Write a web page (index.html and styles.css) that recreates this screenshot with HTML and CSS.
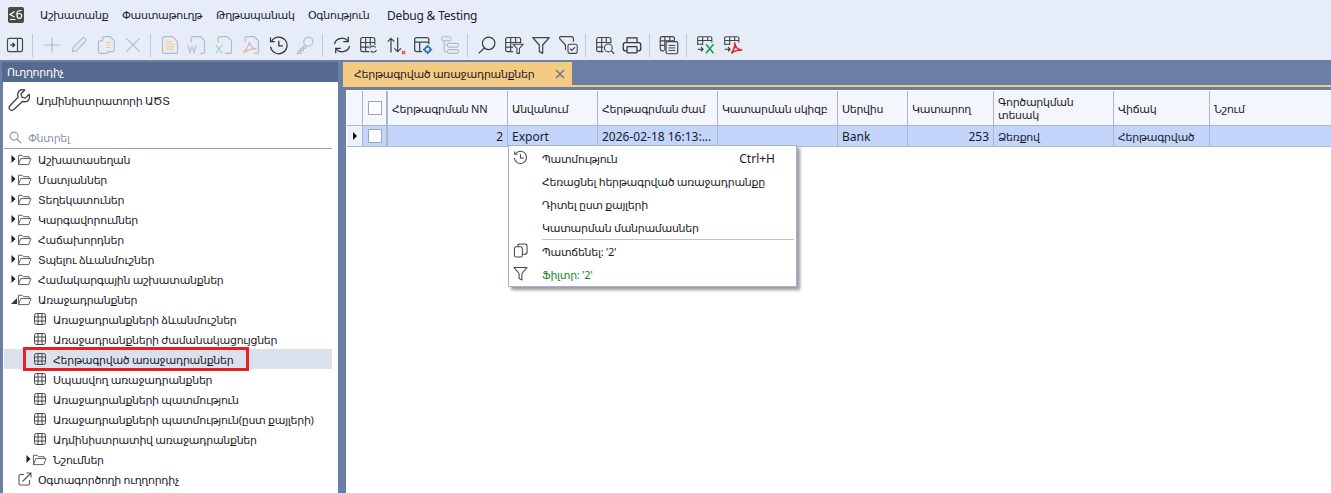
FILE: index.html
```html
<!DOCTYPE html>
<html lang="hy">
<head>
<meta charset="utf-8">
<title>Հերթագրված առաջադրանքներ</title>
<link rel="stylesheet" href="styles.css">
</head>
<body>
<svg class="defs" width="0" height="0">
  <symbol id="folder" viewBox="0 0 16 14"><path d="M1.5 12.5V2.5h4l1.5 1.5h6v2M1.5 12.5l2.5-6.500h11l-2.500 6.500z" fill="none" stroke="currentColor"/></symbol>
  <symbol id="grid" viewBox="0 0 14 14"><rect x="1.500" y="1.500" width="11" height="11" rx="2" fill="none" stroke="currentColor"/><path d="M1.500 5h11M1.500 9h11M5 1.500v11M9 1.500v11" stroke="currentColor" fill="none"/></symbol>
  <symbol id="arrow" viewBox="0 0 6 10"><path d="M0.500 1l4 4-4 4z" fill="currentColor"/></symbol>
</svg>

<header class="menubar">
  <svg class="logo" viewBox="0 0 16 16"><rect width="16" height="16" rx="2" fill="#4a4a4a"/><path d="M6.500 4.500L2 7.500 6.500 10M2 12.500h5.500M9 8V6c0-1.500 1-2.500 4.500-2.500M9 8.500c0-1.500 1-2 2.300-2s2.400.7 2.400 2.300-1 2.500-2.400 2.500S9 10 9 8.500z" fill="none" stroke="#fff" stroke-width="1.200"/></svg>
  <nav class="menu">
    <span class="m1">Աշխատանք</span>
    <span class="m2">Փաստաթուղթ</span>
    <span class="m3">Թղթապանակ</span>
    <span class="m4">Օգնություն</span>
    <span class="m5 lat">Debug &amp; Testing</span>
  </nav>
</header>

<div class="toolbar">
  <span class="tb"><svg viewBox="0 0 24 24"><rect x="3" y="4" width="18" height="16" rx="2" fill="none" stroke="#444" stroke-width="1.400"/><path d="M15 4v16" stroke="#444" stroke-width="1.400"/><path d="M6 12h5M9 9.500l2.500 2.500L9 14.500" fill="none" stroke="#222" stroke-width="1.400"/></svg></span>
  <i class="sep"></i>
  <span class="tb off"><svg viewBox="0 0 24 24"><path d="M12 3v18M3 12h18" stroke="#b5bac4" stroke-width="1.400"/></svg></span>
  <span class="tb off"><svg viewBox="0 0 24 24"><path d="M4 20l1-5L16 4c1-1 2.500-1 3.500 0s1 2.500 0 3.500L9 19z" fill="none" stroke="#b5bac4" stroke-width="1.400"/></svg></span>
  <span class="tb off"><svg viewBox="0 0 24 24"><rect x="3" y="7" width="11" height="15" rx="2" fill="none" stroke="#b5bac4" stroke-width="1.400"/><path d="M8 7V4c0-1 1-2 2-2h7l5 5v11c0 1-1 2-2 2h-6" fill="#e7edf8" stroke="#b5bac4" stroke-width="1.400"/><path d="M12 9h6M12 12h6M12 15h6" stroke="#f2cd97" stroke-width="1.300"/></svg></span>
  <span class="tb off"><svg viewBox="0 0 24 24"><path d="M4 20l16-16M4 4l16 16" stroke="#b5bac4" stroke-width="1.400"/></svg></span>
  <i class="sep"></i>
  <span class="tb off"><svg viewBox="0 0 24 24"><path d="M5 2h10l6 6v12c0 1-1 2-2 2H5c-1 0-2-1-2-2V4c0-1 1-2 2-2z" fill="none" stroke="#b5bac4" stroke-width="1.400"/><path d="M7 8h8M7 11h10M7 14h10M7 17h10" stroke="#f2cd97" stroke-width="1.400"/></svg></span>
  <span class="tb off"><svg viewBox="0 0 24 24"><path d="M5 9V4c0-1 1-2 2-2h9l5 5v13c0 1-1 2-2 2h-3" fill="none" stroke="#b5bac4" stroke-width="1.400"/><path d="M1 12l2.500 9L6 14l2.500 7L11 12" fill="none" stroke="#a9c4e6" stroke-width="1.400"/></svg></span>
  <span class="tb off"><svg viewBox="0 0 24 24"><path d="M5 9V4c0-1 1-2 2-2h9l5 5v13c0 1-1 2-2 2h-6" fill="none" stroke="#b5bac4" stroke-width="1.400"/><path d="M2 12l8 10M10 12l-8 10" stroke="#a8d8b4" stroke-width="1.500"/></svg></span>
  <span class="tb off"><svg viewBox="0 0 24 24"><path d="M5 8V4c0-1 1-2 2-2h9l5 5v13c0 1-1 2-2 2h-3" fill="none" stroke="#b5bac4" stroke-width="1.400"/><path d="M10 8c1 5 3 8 9 9-5-1-10 0-16 4 3-4 7-8 7-13z" fill="none" stroke="#eeb0ad" stroke-width="1.500"/></svg></span>
  <span class="tb"><svg viewBox="0 0 24 24"><path d="M4.500 7A10 10 0 1 1 3 14" fill="none" stroke="#333" stroke-width="1.500"/><path d="M3 3v5h5M13 7v6h5" fill="none" stroke="#333" stroke-width="1.500"/></svg></span>
  <span class="tb off"><svg viewBox="0 0 24 24"><circle cx="16" cy="8" r="5.500" fill="none" stroke="#b5bac4" stroke-width="1.400"/><path d="M12 12L3 21v1h4v-3h3v-3h2l1.500-2" fill="none" stroke="#b5bac4" stroke-width="1.400"/></svg></span>
  <i class="sep"></i>
  <span class="tb"><svg viewBox="0 0 24 24"><path d="M3 11a9 8 0 0 1 16-4M21 13a9 8 0 0 1-16 4" fill="none" stroke="#333" stroke-width="1.500"/><path d="M19.500 2v6h-6M4.500 22v-6h6" fill="none" stroke="#333" stroke-width="1.500"/></svg></span>
  <span class="tb"><svg viewBox="0 0 24 24"><rect x="2" y="3" width="17" height="17" rx="2.500" fill="none" stroke="#444" stroke-width="1.400"/><path d="M2 9h17M2 14.500h17M8 3v17M13.500 3v17" stroke="#444" stroke-width="1.400"/><circle cx="17" cy="17" r="5.500" fill="#e7edf8"/><path d="M13 16a4 4 0 0 1 7-1M21 18a4 4 0 0 1-7 1" fill="none" stroke="#444" stroke-width="1.300"/></svg></span>
  <span class="tb"><svg viewBox="0 0 24 24"><path d="M6 21V4M2 8l4-4 4 4M14 3v17M10 16l4 4 4-4" fill="none" stroke="#444" stroke-width="1.500"/><path d="M19 19l4 4M23 19l-4 4" stroke="#e23b3b" stroke-width="1.500"/></svg></span>
  <span class="tb"><svg viewBox="0 0 24 24"><path d="M11 20H4.500C3 20 2 19 2 17.500V5.500C2 4 3 3 4.500 3h12C18 3 19 4 19 5.500V11M2 8.500h17M8 8.500V20" fill="none" stroke="#444" stroke-width="1.500"/><circle cx="17.500" cy="17.500" r="3.200" fill="none" stroke="#2d74c4" stroke-width="2.200"/><path d="M17.500 12v2M17.500 21v2M12 17.500h2M21 17.500h2" stroke="#2d74c4" stroke-width="2"/></svg></span>
  <span class="tb off"><svg viewBox="0 0 24 24"><rect x="2" y="2" width="11" height="5" rx="1.500" fill="none" stroke="#b5bac4" stroke-width="1.300"/><rect x="9" y="10" width="13" height="4.500" rx="1.500" fill="none" stroke="#b5bac4" stroke-width="1.300"/><rect x="9" y="17.500" width="13" height="4.500" rx="1.500" fill="none" stroke="#b5bac4" stroke-width="1.300"/><path d="M5 7v13h4M5 12h4" fill="none" stroke="#b5bac4" stroke-width="1.300"/></svg></span>
  <i class="sep"></i>
  <span class="tb"><svg viewBox="0 0 24 24"><circle cx="14" cy="10" r="7.500" fill="none" stroke="#333" stroke-width="1.400"/><path d="M9 15.500L2 22" stroke="#333" stroke-width="1.500"/></svg></span>
  <span class="tb"><svg viewBox="0 0 24 24"><path d="M11 20H4.500C3 20 2 19 2 17.500V5.500C2 4 3 3 4.500 3h13C19 3 20 4 20 5.500V10M2 9h18M2 14.500h9M8 3v17M14 3v7" fill="none" stroke="#444" stroke-width="1.400"/><path d="M11 11h12l-4.500 5v6h-3v-6z" fill="#e7edf8" stroke="#444" stroke-width="1.300"/></svg></span>
  <span class="tb"><svg viewBox="0 0 24 24"><path d="M2 3h20l-8 9v10l-4-2v-8z" fill="none" stroke="#444" stroke-width="1.500" stroke-linejoin="round"/></svg></span>
  <span class="tb"><svg viewBox="0 0 24 24"><path d="M9 18v-6L2 4.500C1.500 3 2 2 3.500 2H16c1.500 0 2.500 1 2.500 2.500V8" fill="none" stroke="#444" stroke-width="1.400"/><rect x="12" y="11" width="11" height="11" rx="2" fill="none" stroke="#444" stroke-width="1.300"/><path d="M14.500 16.500l2 2 4-4" fill="none" stroke="#444" stroke-width="1.300"/></svg></span>
  <i class="sep"></i>
  <span class="tb"><svg viewBox="0 0 24 24"><path d="M10 20H4.500C3 20 2 19 2 17.500V5.500C2 4 3 3 4.500 3h12C18 3 19 4 19 5.500V10M2 9h17M2 14.500h8M8 3v17M13.500 3v7" fill="none" stroke="#444" stroke-width="1.400"/><circle cx="16" cy="15.500" r="4.700" fill="#e7edf8" stroke="#444" stroke-width="1.300"/><path d="M19.500 19l3.500 3.500" stroke="#444" stroke-width="1.500"/></svg></span>
  <span class="tb"><svg viewBox="0 0 24 24"><path d="M6 9V3.500h12V9M6 19H4c-1.500 0-2.500-1-2.500-2.500V11.500C1.500 10 2.500 9 4 9h16c1.500 0 2.500 1 2.500 2.500v5c0 1.500-1 2.500-2.500 2.500h-2" fill="none" stroke="#333" stroke-width="1.500"/><rect x="6" y="14" width="12" height="7.500" rx="1" fill="none" stroke="#333" stroke-width="1.500"/></svg></span>
  <i class="sep"></i>
  <span class="tb"><svg viewBox="0 0 24 24"><path d="M6 19H4c-1.500 0-2.500-1-2.500-2.500v-12C1.500 3 2.500 2 4 2h12c1.500 0 2.500 1 2.500 2.500V7M1.500 7h17M1.500 12.500h5M7 2v17M13 2v5" fill="none" stroke="#444" stroke-width="1.400"/><rect x="8.500" y="8" width="14" height="14.500" rx="2" fill="#e7edf8" stroke="#444" stroke-width="1.400"/><path d="M11.500 12.500h8M11.500 15.500h8M11.500 18.500h8" stroke="#444" stroke-width="1.200"/></svg></span>
  <i class="sep"></i>
  <span class="tb"><svg viewBox="0 0 24 24"><path d="M2 12V3.500C2 2.500 3 2 4 2h13c1 0 2 .5 2 1.500V9M2 6.500h17M8 2v10M14 2v5M2 11h6" fill="none" stroke="#444" stroke-width="1.300"/><path d="M2 17h6M6 14.500L8.500 17 6 19.500" fill="none" stroke="#333" stroke-width="1.300"/><path d="M12 11l9 11M21 11l-9 11" stroke="#18a050" stroke-width="2"/></svg></span>
  <span class="tb"><svg viewBox="0 0 24 24"><path d="M2 12V3.500C2 2.500 3 2 4 2h13c1 0 2 .5 2 1.500V9M2 6.500h17M8 2v10M14 2v5M2 11h6" fill="none" stroke="#444" stroke-width="1.300"/><path d="M2 17h6M6 14.500L8.500 17 6 19.500" fill="none" stroke="#333" stroke-width="1.300"/><path d="M14 9c.5 5 2 8 9 9-5 0-9 0-13 4 3-4 5-8 4-13z" fill="none" stroke="#e0282e" stroke-width="2"/></svg></span>
</div>

<main class="main">
  <aside class="side">
    <h2 class="side-title">Ուղղորդիչ</h2>
    <div class="side-body">
      <div class="admin">
        <svg class="wrench" viewBox="0 0 24 24"><path d="M22 5.500l-4 4-3.500-1-1-3.500 4-4c-3-.8-6 .2-7 3-.6 1.600-.4 3 .2 4.300L2 17.500c-1.500 1.500-.8 3.200 0 4s2.500 1.300 4 0l9.500-8.700c1.300.6 2.800.7 4.200.1 2.500-1 3.200-4.400 2.300-7.400z" fill="none" stroke="#444" stroke-width="1.400" stroke-linejoin="round"/></svg>
        <span>Ադմինիստրատորի ԱԾՏ</span>
      </div>
      <div class="search">
        <svg class="mag" viewBox="0 0 14 14"><circle cx="5.500" cy="5.500" r="4.300" fill="none" stroke="#8a93a6" stroke-width="1.200"/><path d="M8.700 8.700l4.300 4.300" stroke="#8a93a6" stroke-width="1.300"/></svg>
        <span>Փնտրել</span>
      </div>
      <ul class="tree">
        <li class="node"><svg class="tw"><use href="#arrow"/></svg><svg class="fd"><use href="#folder"/></svg><span>Աշխատասեղան</span></li>
        <li class="node"><svg class="tw"><use href="#arrow"/></svg><svg class="fd"><use href="#folder"/></svg><span>Մատյաններ</span></li>
        <li class="node"><svg class="tw"><use href="#arrow"/></svg><svg class="fd"><use href="#folder"/></svg><span>Տեղեկատուներ</span></li>
        <li class="node"><svg class="tw"><use href="#arrow"/></svg><svg class="fd"><use href="#folder"/></svg><span>Կարգավորումներ</span></li>
        <li class="node"><svg class="tw"><use href="#arrow"/></svg><svg class="fd"><use href="#folder"/></svg><span>Հաճախորդներ</span></li>
        <li class="node"><svg class="tw"><use href="#arrow"/></svg><svg class="fd"><use href="#folder"/></svg><span>Տպելու ձևանմուշներ</span></li>
        <li class="node"><svg class="tw"><use href="#arrow"/></svg><svg class="fd"><use href="#folder"/></svg><span>Համակարգային աշխատանքներ</span></li>
        <li class="node"><svg class="tw open" viewBox="0 0 6 6"><path d="M6 0v6H0z" fill="#333"/></svg><svg class="fd"><use href="#folder"/></svg><span>Առաջադրանքներ</span></li>
        <li class="leaf"><svg class="gr"><use href="#grid"/></svg><span>Առաջադրանքների ձևանմուշներ</span></li>
        <li class="leaf"><svg class="gr"><use href="#grid"/></svg><span>Առաջադրանքների ժամանակացույցներ</span></li>
        <li class="leaf sel"><svg class="gr"><use href="#grid"/></svg><span>Հերթագրված առաջադրանքներ</span><b class="redbox"></b></li>
        <li class="leaf"><svg class="gr"><use href="#grid"/></svg><span>Սպասվող առաջադրանքներ</span></li>
        <li class="leaf"><svg class="gr"><use href="#grid"/></svg><span>Առաջադրանքների պատմություն</span></li>
        <li class="leaf"><svg class="gr"><use href="#grid"/></svg><span>Առաջադրանքների պատմություն(ըստ քայլերի)</span></li>
        <li class="leaf"><svg class="gr"><use href="#grid"/></svg><span>Ադմինիստրատիվ առաջադրանքներ</span></li>
        <li class="node sub"><svg class="tw"><use href="#arrow"/></svg><svg class="fd"><use href="#folder"/></svg><span>Նշումներ</span></li>
        <li class="ext"><svg class="ex" viewBox="0 0 14 14"><path d="M6 2.500H2.500c-1 0-1.500.5-1.500 1.500v7.500c0 1 .5 1.500 1.500 1.500H10c1 0 1.500-.5 1.500-1.500V8M4.500 9.500L13 1M8.500 1H13v4.500" fill="none" stroke="#555" stroke-width="1.100"/></svg><span>Օգտագործողի ուղղորդիչ</span></li>
      </ul>
    </div>
  </aside>

  <section class="work">
    <div class="tabs">
      <div class="tab"><span>Հերթագրված առաջադրանքներ</span>
        <svg class="tabx" viewBox="0 0 10 10"><path d="M1 1l8 8M9 1L1 9" stroke="#5a6c90" stroke-width="1.200"/></svg>
      </div>
    </div>
    <div class="pane">
      <div class="grid">
        <div class="row head">
          <div class="c ind"></div>
          <div class="c chk"><i class="box"></i></div>
          <div class="c">Հերթագրման NN</div>
          <div class="c">Անվանում</div>
          <div class="c">Հերթագրման ժամ</div>
          <div class="c">Կատարման սկիզբ</div>
          <div class="c">Սերվիս</div>
          <div class="c">Կատարող</div>
          <div class="c">Գործարկման տեսակ</div>
          <div class="c">Վիճակ</div>
          <div class="c">Նշում</div>
        </div>
        <div class="row data">
          <div class="c ind"><svg class="rowmark" viewBox="0 0 6 10"><path d="M1 1l4 4-4 4z" fill="#111"/></svg></div>
          <div class="c chk"><i class="box"></i></div>
          <div class="c num lat">2</div>
          <div class="c lat">Export</div>
          <div class="c lat">2026-02-18 16:13:...</div>
          <div class="c"></div>
          <div class="c lat">Bank</div>
          <div class="c num lat">253</div>
          <div class="c">Ձեռքով</div>
          <div class="c">Հերթագրված</div>
          <div class="c"></div>
        </div>
      </div>
      <div class="ctx">
        <div class="mi"><svg class="mic" viewBox="0 0 16 16"><path d="M2.800 4A6.500 6.500 0 1 1 1.500 8.500" fill="none" stroke="#444" stroke-width="1.100"/><path d="M1.800 1.500v3h3M8 4.500V8.500h3.500" fill="none" stroke="#444" stroke-width="1.100"/></svg><span class="ml">Պատմություն</span><span class="sc lat">Ctrl+H</span></div>
        <div class="mi"><span class="ml">Հեռացնել հերթագրված առաջադրանքը</span></div>
        <div class="mi"><span class="ml">Դիտել ըստ քայլերի</span></div>
        <div class="mi"><span class="ml">Կատարման մանրամասներ</span></div>
        <hr class="msep">
        <div class="mi"><svg class="mic" viewBox="0 0 16 16"><rect x="1.500" y="4" width="8.500" height="11" rx="2" fill="none" stroke="#444" stroke-width="1.100"/><path d="M5 3.500C5 2 6 1 7.500 1h5C14 1 15 2 15 3.500v6c0 1.500-1 2.500-2.500 2.500H10" fill="none" stroke="#444" stroke-width="1.100"/></svg><span class="ml">Պատճենել: '2'</span></div>
        <div class="mi green"><svg class="mic" viewBox="0 0 16 16"><path d="M1 1.500h14L9.500 8v7l-3-1.500V8z" fill="none" stroke="#444" stroke-width="1.100" stroke-linejoin="round"/></svg><span class="ml">Ֆիլտր: '2'</span></div>
      </div>
    </div>
  </section>
</main>
</body>
</html>
```

FILE: styles.css
```css
* { box-sizing: border-box; }
html, body { margin: 0; height: 100%; overflow: hidden; }
body {
  width: 1331px;
  height: 493px;
  display: flex;
  flex-direction: column;
  background: #e7edf8;
  font: 11px "Noto Sans", "DejaVu Sans", sans-serif;
  letter-spacing: -0.3px;
  color: #1c1c28;
}
.defs { position: absolute; }
.lat { font-size: 12px; letter-spacing: 0; }

.menubar { height: 30px; display: flex; align-items: center; padding: 0 0 0 8px; flex: none; }
.logo { width: 16px; height: 16px; margin-right: 16px; }
.menu { display: flex; }
.menu span { display: block; white-space: nowrap; }
.m1 { width: 82px; }
.m2 { width: 94px; }
.m3 { width: 92px; }
.m4 { width: 79px; }
.menu .m5 { letter-spacing: -0.2px; }

.toolbar { height: 30px; display: flex; align-items: center; padding-left: 1px; flex: none; }
.tb { width: 27px; height: 24px; display: flex; align-items: center; justify-content: center; }
.tb svg { width: 20px; height: 20px; }
.sep { width: 1px; height: 23px; background: #bcc6d8; margin: 0 5px 0 4px; }

.main { flex: 1; display: flex; background: #6b7ea6; min-height: 0; }
.side { width: 335px; margin: 2px 5px 0 3px; display: flex; flex-direction: column; background: #fff; }
.side-title { margin: 0 0 0 -1px; height: 20px; line-height: 20px; padding-left: 5px; background: #56698f; color: #fff; font-size: 11px; font-weight: 400; }
.side-body { flex: 1; padding-left: 1px; min-height: 0; }
.admin { height: 38px; display: flex; align-items: center; gap: 5px; padding: 0 0 2px 4px; }
.wrench { width: 23px; height: 23px; }
.search { height: 29px; margin: 0 6px 0 0; border-bottom: 1px solid #99a5bb; display: flex; align-items: center; gap: 6px; padding: 7px 0 0 5px; color: #8a93a6; }
.mag { width: 13px; height: 13px; }

.tree { list-style: none; margin: 0; padding: 0; }
.tree li { height: 20px; display: flex; align-items: center; margin-right: 6px; white-space: nowrap; position: relative; }
.tw { width: 6px; height: 10px; color: #222; flex: none; }
.tw.open { height: 6px; margin-top: 3px; }
.fd { width: 15px; height: 13px; color: #555; flex: none; margin: 0 6px 0 0; }
.gr { width: 14px; height: 14px; color: #444; flex: none; margin-right: 6px; }
.node { padding-left: 7px; }
.leaf { padding-left: 29px; }
.tree .sub { padding-left: 22px; }
.ext { padding-left: 14px; }
.ex { width: 14px; height: 14px; margin-right: 6px; flex: none; }
.sel { background: #dbe1ec; }
.redbox { position: absolute; left: 19px; top: -2px; width: 226px; height: 24px; border: 3px solid #e5201f; }

.work { flex: 1; display: flex; flex-direction: column; min-width: 0; }
.tabs { height: 25px; margin-top: 2px; flex: none; }
.tab { width: 229px; height: 23px; background: #f3cb83; display: flex; align-items: center; padding: 0 0 0 11px; white-space: nowrap; }
.tab span { width: 201px; }
.tabx { width: 10px; height: 10px; }
.pane { flex: 1; position: relative; background: #fff; border-top: 2px solid #f3cb83; margin-top: -2px; padding-top: 3px; box-shadow: inset 3px 0 0 #6b7ea6, inset 0 3px 0 #6b7ea6; padding-left: 4px; }

.grid { display: flex; flex-direction: column; margin-top: 1px; }
.row { display: grid; grid-template-columns: 16px 25px 120px 90px 120px 120px 70px 86px 120px 96px 122px; }
.c { border-right: 1px solid #aab6ce; border-bottom: 1px solid #aab6ce; padding: 0 4px; display: flex; align-items: center; overflow: hidden; white-space: nowrap; min-width: 0; }
.c:last-child { border-right: 0; }
.head { height: 35px; background: #f3f6fd; border-bottom: 1px solid #aab6ce; }
.head .c { white-space: normal; line-height: 13px; border-bottom: 0; }
.data { height: 21px; background: #c3d5fb; }
.data .ind { background: #eef2fb; }
.ind { padding: 0; justify-content: center; }
.chk { padding: 0; justify-content: center; border-right-width: 2px; }
.box { width: 14px; height: 14px; background: #fff; border: 1px solid #99a5c2; display: block; }
.num { justify-content: flex-end; }
.rowmark { width: 6px; height: 10px; }

.ctx { position: absolute; left: 165px; top: 58px; width: 289px; height: 142px; background: #fff; border: 1px solid #a5b2ca; box-shadow: 3px 3px 3px rgba(70, 70, 80, .55); padding-top: 1px; }
.mi { height: 23px; display: flex; align-items: center; position: relative; padding-left: 33px; }
.mic { position: absolute; left: 4px; top: 3px; width: 15px; height: 15px; }
.ml { flex: 1; }
.sc { margin-right: 21px; }
.msep { margin: 0 2px 0 33px; border: 0; border-top: 1px solid #bcc3d0; height: 1px; }
.green { color: #0c8a1e; }
```
